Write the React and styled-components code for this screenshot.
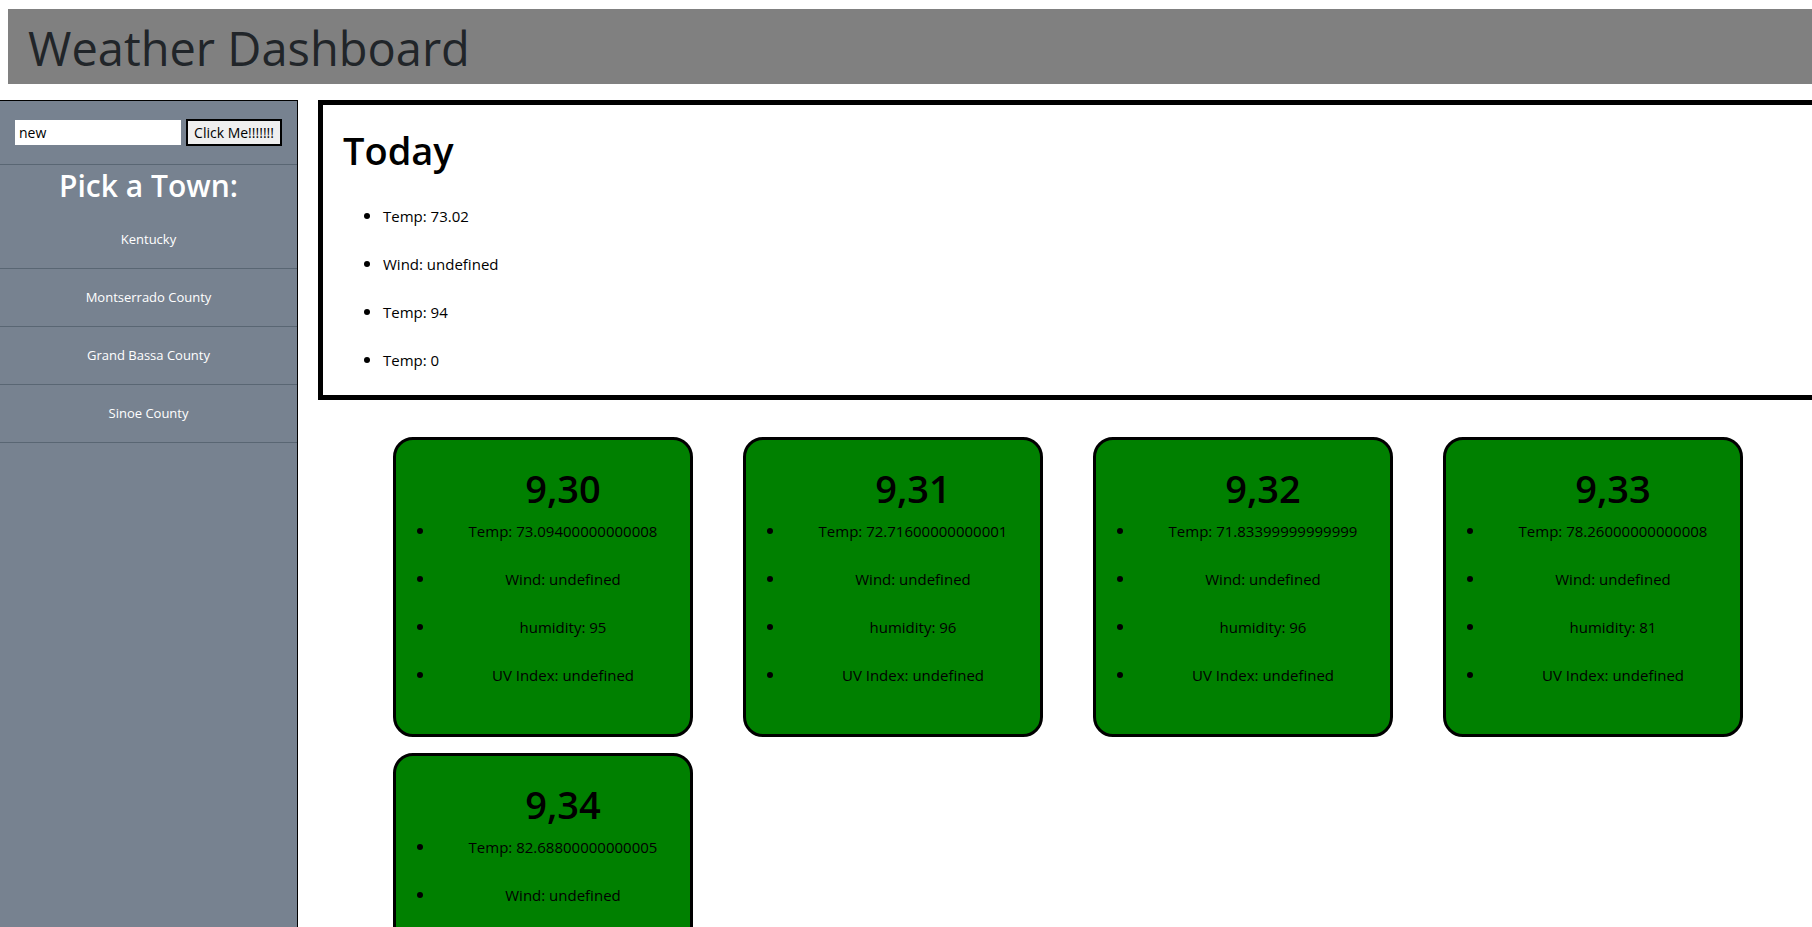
import React, { useState } from "react";
import styled, { createGlobalStyle } from "styled-components";

const GlobalStyle = createGlobalStyle`
  *, *::before, *::after { box-sizing: border-box; }
  body {
    margin: 0;
    background: #fff;
    color: #000;
    font-family: "Segoe UI", "Open Sans", "Noto Sans", sans-serif;
    font-size: 15px;
    line-height: 24px;
  }
  h1, h2, ul { margin: 0; }
`;

const Header = styled.header`
  margin: 9px 0 16px 8px;
  padding: 9px 20px 6px;
  background: #808080;
`;

const PageTitle = styled.h1`
  color: #212529;
  font-size: 47px;
  font-weight: 400;
  line-height: 60px;
`;

const Layout = styled.div`
  display: flex;
  gap: 20px;
  min-height: calc(100vh - 100px);
`;

const Sidebar = styled.aside`
  flex: 0 0 298px;
  border: solid #000;
  border-width: 1px 1px 0 0;
  background: #778290;
  color: #fff;
  text-align: center;
`;

const SearchForm = styled.form`
  display: flex;
  align-items: center;
  gap: 5px;
  padding: 18px 15px;
  border-bottom: 1px solid #596673;
`;

const SearchInput = styled.input`
  flex: 1;
  min-width: 0;
  height: 25px;
  padding: 0 4px;
  border: 0;
  background: #fff;
  color: #000;
  font: inherit;
  font-size: 14px;
`;

const SearchButton = styled.button`
  height: 27px;
  padding: 0 6px;
  border: 2px solid #000;
  background: #efefef;
  color: #000;
  font: inherit;
  font-size: 14px;
  line-height: 22px;
`;

const SidebarTitle = styled.h2`
  margin-bottom: 4px;
  font-size: 30px;
  font-weight: 600;
  line-height: 42px;
`;

const TownList = styled.ul`
  padding: 0;
  list-style: none;
`;

const TownLink = styled.a`
  display: block;
  height: 58px;
  border-bottom: 1px solid #596673;
  color: #fff;
  font-size: 13px;
  font-weight: 500;
  line-height: 56px;
  text-decoration: none;
`;

const Main = styled.main`
  flex: 1;
  min-width: 0;
`;

const Today = styled.section`
  padding: 15px 20px 14px;
  border: 5px solid #000;
  border-right: 0;
`;

const SectionTitle = styled.h2`
  font-size: 38px;
  font-weight: 600;
  line-height: 60px;
`;

const Readings = styled.ul`
  display: grid;
  grid-auto-rows: 24px;
  gap: 24px;
  padding: 0 0 0 40px;

  li::marker {
    font-size: 17px;
  }
`;

const TodayReadings = styled(Readings)`
  margin: 24px 0 9px;
`;

const Forecast = styled.div`
  display: grid;
  grid-template-columns: repeat(auto-fill, 300px);
  gap: 16px 50px;
  padding: 37px 0 16px 75px;
`;

const Card = styled.article`
  height: 300px;
  padding: 18px 0;
  border: 3px solid #000;
  border-radius: 20px;
  background: #008000;
  text-align: center;
`;

const CardTitle = styled(SectionTitle)`
  margin-bottom: 1px;
  padding-left: 40px;
`;

const towns = ["Kentucky", "Montserrado County", "Grand Bassa County", "Sinoe County"];

const today = ["Temp: 73.02", "Wind: undefined", "Temp: 94", "Temp: 0"];

const days = [
  { date: "9,30", temp: "73.09400000000008", humidity: 95 },
  { date: "9,31", temp: "72.71600000000001", humidity: 96 },
  { date: "9,32", temp: "71.83399999999999", humidity: 96 },
  { date: "9,33", temp: "78.26000000000008", humidity: 81 },
  { date: "9,34", temp: "82.68800000000005", humidity: 95 },
];

function ForecastCard({ day }) {
  return (
    <Card>
      <CardTitle>{day.date}</CardTitle>
      <Readings>
        <li>Temp: {day.temp}</li>
        <li>Wind: undefined</li>
        <li>humidity: {day.humidity}</li>
        <li>UV Index: undefined</li>
      </Readings>
    </Card>
  );
}

export default function App() {
  const [town, setTown] = useState("new");

  return (
    <>
      <GlobalStyle />
      <Header>
        <PageTitle>Weather Dashboard</PageTitle>
      </Header>
      <Layout>
        <Sidebar>
          <SearchForm onSubmit={(event) => event.preventDefault()}>
            <SearchInput
              type="text"
              aria-label="Town"
              value={town}
              onChange={(event) => setTown(event.target.value)}
            />
            <SearchButton type="submit">Click Me!!!!!!!</SearchButton>
          </SearchForm>
          <SidebarTitle>Pick a Town:</SidebarTitle>
          <TownList>
            {towns.map((name) => (
              <li key={name}>
                <TownLink href="#">{name}</TownLink>
              </li>
            ))}
          </TownList>
        </Sidebar>
        <Main>
          <Today>
            <SectionTitle>Today</SectionTitle>
            <TodayReadings>
              {today.map((reading) => (
                <li key={reading}>{reading}</li>
              ))}
            </TodayReadings>
          </Today>
          <Forecast>
            {days.map((day) => (
              <ForecastCard key={day.date} day={day} />
            ))}
          </Forecast>
        </Main>
      </Layout>
    </>
  );
}
